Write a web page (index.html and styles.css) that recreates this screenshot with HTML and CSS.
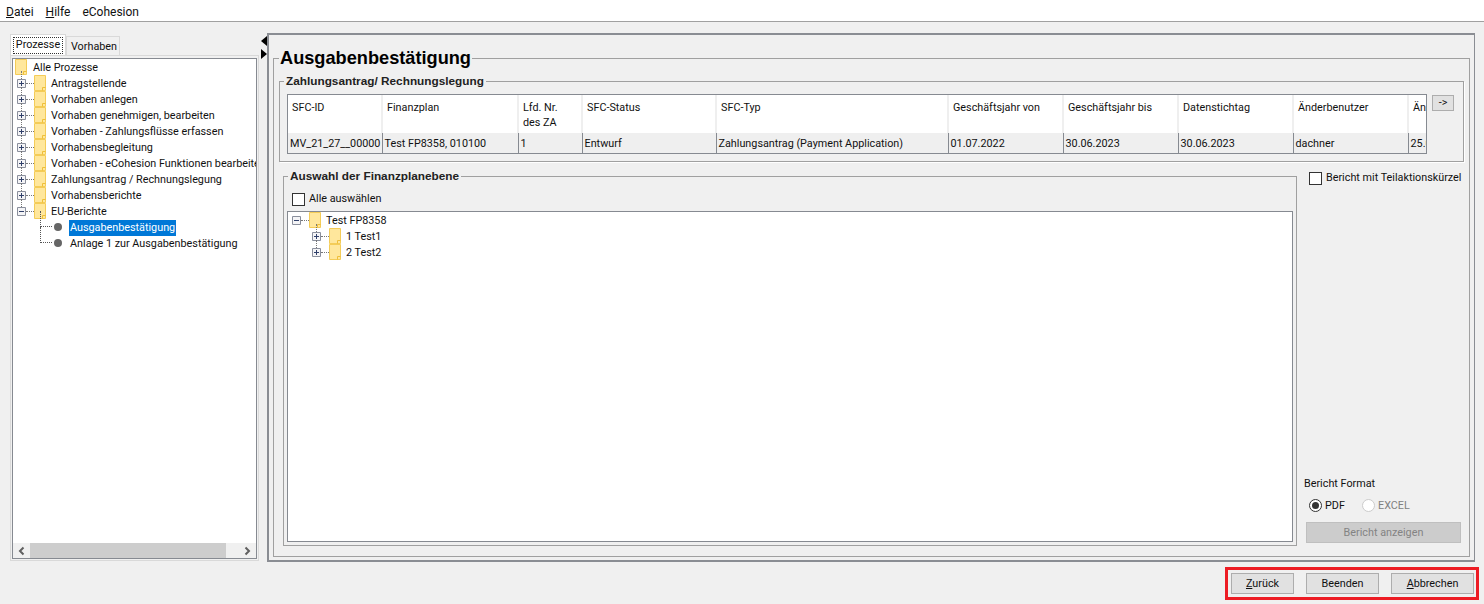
FILE: index.html
```html
<!DOCTYPE html>
<html lang="de">
<head>
    <meta charset="UTF-8">
    <title>eCohesion</title>
    <link rel="stylesheet" href="styles.css">
</head>
<body>
  <svg class="defs" width="0" height="0">
    <symbol id="folder" viewBox="0 0 12 16">
      <path d="M.5.5h11v15h-11z" fill="#ffe79c" stroke="#f4cc58"/>
      <path d="M8.500 15.500v-3h3" fill="none" stroke="#eebf3a"/>
    </symbol>
    <symbol id="plus" viewBox="0 0 9 9">
      <path d="M.5.5h8v8h-8z" fill="#f4f4f6" stroke="#8a8f9c"/>
      <path d="M2 4.500h5M4.500 2v5" stroke="#30406a"/>
    </symbol>
    <symbol id="minus" viewBox="0 0 9 9">
      <path d="M.5.5h8v8h-8z" fill="#f4f4f6" stroke="#8a8f9c"/>
      <path d="M2 4.500h5" stroke="#30406a"/>
    </symbol>
  </svg>

  <div class="menubar">
    <span><u>D</u>atei</span>
    <span><u>H</u>ilfe</span>
    <span>eCohesion</span>
  </div>

  <div class="main">
    <div class="left">
      <div class="tabs">
        <div class="tab active"><span>Prozesse</span></div>
        <div class="tab">Vorhaben</div>
      </div>
      <div class="navbox">
        <div class="navtree">
          <div class="node root"><svg class="fld"><use href="#folder"/></svg><span>Alle Prozesse</span></div>
          <div class="node"><svg class="pm"><use href="#plus"/></svg><i class="dash"></i><svg class="fld"><use href="#folder"/></svg><span>Antragstellende</span></div>
          <div class="node"><svg class="pm"><use href="#plus"/></svg><i class="dash"></i><svg class="fld"><use href="#folder"/></svg><span>Vorhaben anlegen</span></div>
          <div class="node"><svg class="pm"><use href="#plus"/></svg><i class="dash"></i><svg class="fld"><use href="#folder"/></svg><span>Vorhaben genehmigen, bearbeiten</span></div>
          <div class="node"><svg class="pm"><use href="#plus"/></svg><i class="dash"></i><svg class="fld"><use href="#folder"/></svg><span>Vorhaben - Zahlungsflüsse erfassen</span></div>
          <div class="node"><svg class="pm"><use href="#plus"/></svg><i class="dash"></i><svg class="fld"><use href="#folder"/></svg><span>Vorhabensbegleitung</span></div>
          <div class="node"><svg class="pm"><use href="#plus"/></svg><i class="dash"></i><svg class="fld"><use href="#folder"/></svg><span>Vorhaben - eCohesion Funktionen bearbeiten</span></div>
          <div class="node"><svg class="pm"><use href="#plus"/></svg><i class="dash"></i><svg class="fld"><use href="#folder"/></svg><span>Zahlungsantrag / Rechnungslegung</span></div>
          <div class="node"><svg class="pm"><use href="#plus"/></svg><i class="dash"></i><svg class="fld"><use href="#folder"/></svg><span>Vorhabensberichte</span></div>
          <div class="node"><svg class="pm"><use href="#minus"/></svg><i class="dash"></i><svg class="fld"><use href="#folder"/></svg><span>EU-Berichte</span></div>
          <div class="node leaf"><i class="elbow"></i><i class="dot"></i><span class="sel">Ausgabenbestätigung</span></div>
          <div class="node leaf"><i class="elbow"></i><i class="dot"></i><span>Anlage 1 zur Ausgabenbestätigung</span></div>
        </div>
        <div class="hscroll">
          <svg class="arrow" viewBox="0 0 17 10"><path d="M10.500 1.500 7 5l3.500 3.500" fill="none" stroke="#606060" stroke-width="2"/></svg>
          <div class="thumb"></div>
          <svg class="arrow last" viewBox="0 0 17 10"><path d="M6.500 1.500 10 5 6.500 8.500" fill="none" stroke="#606060" stroke-width="2"/></svg>
        </div>
      </div>
    </div>

    <div class="splitter">
      <i class="tri tri-l"></i>
      <i class="tri tri-r"></i>
    </div>

    <div class="panel">
      <fieldset class="page">
        <legend>Ausgabenbestätigung</legend>

        <fieldset class="group antrag">
          <legend>Zahlungsantrag/ Rechnungslegung</legend>
          <div class="tablerow">
            <div class="tablewrap">
              <table>
                <colgroup>
                  <col class="c1"><col class="c2"><col class="c3"><col class="c4"><col class="c5">
                  <col class="c6"><col class="c6"><col class="c6"><col class="c6"><col class="c7">
                </colgroup>
                <tr>
                  <th>SFC-ID</th><th>Finanzplan</th><th>Lfd. Nr.<br>des ZA</th><th>SFC-Status</th><th>SFC-Typ</th>
                  <th>Geschäftsjahr von</th><th>Geschäftsjahr bis</th><th>Datenstichtag</th><th>Änderbenutzer</th><th>Änderdatum</th>
                </tr>
                <tr>
                  <td>MV_21_27__00000</td><td>Test FP8358, 010100</td><td>1</td><td>Entwurf</td><td>Zahlungsantrag (Payment Application)</td>
                  <td>01.07.2022</td><td>30.06.2023</td><td>30.06.2023</td><td>dachner</td><td>25.07.2023</td>
                </tr>
              </table>
            </div>
            <button class="btn more">-&gt;</button>
          </div>
        </fieldset>

        <div class="lower">
          <fieldset class="group auswahl">
            <legend>Auswahl der Finanzplanebene</legend>
            <label class="check all"><i class="box"></i>Alle auswählen</label>
            <div class="plantree">
              <div class="node"><svg class="pm"><use href="#minus"/></svg><i class="dash"></i><svg class="fld"><use href="#folder"/></svg><span>Test FP8358</span></div>
              <div class="node sub"><svg class="pm"><use href="#plus"/></svg><i class="dash"></i><svg class="fld"><use href="#folder"/></svg><span>1 Test1</span></div>
              <div class="node sub"><svg class="pm"><use href="#plus"/></svg><i class="dash"></i><svg class="fld"><use href="#folder"/></svg><span>2 Test2</span></div>
            </div>
          </fieldset>

          <div class="options">
            <label class="check"><i class="box"></i>Bericht mit Teilaktionskürzel</label>
            <div class="format">
              <div class="format-title">Bericht Format</div>
              <div class="radios">
                <label class="radio"><i class="ring on"></i>PDF</label>
                <label class="radio off"><i class="ring"></i>EXCEL</label>
              </div>
              <button class="btn report">Bericht anzeigen</button>
            </div>
          </div>
        </div>
      </fieldset>
    </div>
  </div>

  <div class="footer">
    <div class="actions">
      <button class="btn zurueck"><u>Z</u>urück</button>
      <button class="btn beenden">Beenden</button>
      <button class="btn abbrechen"><u>A</u>bbrechen</button>
    </div>
  </div>
</body>
</html>
```

FILE: styles.css
```css
* {
  box-sizing: border-box;
}

html, body {
  margin: 0;
  height: 604px;
  overflow: hidden;
}

body {
  background-color: #f0f0f0;
  color: #111;
  font-family: Roboto, "Noto Sans", sans-serif;
  font-size: 10.800px;
  display: flex;
  flex-direction: column;
}

.defs {
  position: absolute;
}

i {
  display: block;
  flex: none;
}

/* menu */
.menubar {
  height: 22px;
  padding: 4px 0 0 6px;
  display: flex;
  gap: 12px;
  font-size: 12px;
  line-height: 16px;
  background: #fff;
  border-bottom: 1px solid #a0a0a0;
}

/* main area */
.main {
  height: 542px;
  display: flex;
  padding: 11px 10px 0 10px;
}

.left {
  width: 249px;
  padding-top: 1px;
  display: flex;
  flex-direction: column;
}

.tabs {
  display: flex;
  height: 21px;
  align-items: flex-end;
}

.tab {
  width: 54px;
  height: 19px;
  padding-left: 2px;
  line-height: 20px;
  text-align: center;
  background: #f0f0f0;
  border: 1px solid #d9d9d9;
  border-bottom: 0;
}

.tab.active {
  width: 56px;
  height: 21px;
  padding: 2px;
  background: #fff;
}

.tab.active span {
  display: block;
  height: 17px;
  line-height: 13px;
  border: 1px dotted #333;
}

.navbox {
  height: 506px;
  border: 1px solid #d9d9d9;
  padding: 2px 1px 1px;
  display: flex;
  flex-direction: column;
}

.navtree {
  flex: 1;
  min-height: 0;
  overflow: hidden;
  background: #fff;
  border: solid #868a91;
  border-width: 1px 1px 0;
  padding-left: 2px;
}

.node {
  height: 16px;
  display: flex;
  align-items: center;
  white-space: nowrap;
  line-height: 16px;
  position: relative;
}

.node span {
  flex: none;
  margin-top: 2px;
}

/* dotted line between the +/- boxes */
.navtree .node:not(.root):not(.leaf)::before,
.plantree .sub::before {
  content: "";
  position: absolute;
  top: -4px;
  height: 12px;
  border-left: 1px dotted #777;
  margin-left: 6px;
}

.navtree .root .fld {
  margin-right: 6px;
}

.fld {
  width: 12px;
  height: 16px;
  flex: none;
  margin-right: 5px;
}

.pm {
  width: 9px;
  height: 9px;
  flex: none;
  margin-left: 2px;
  position: relative;
}

.dash {
  width: 8px;
  border-top: 1px dotted #777;
}

.leaf {
  padding-left: 25px;
}

.elbow {
  width: 12px;
  height: 16px;
  margin: -16px 2px 0 0;
  border-left: 1px dotted #555;
  border-bottom: 1px dotted #555;
}

.dot {
  width: 8px;
  height: 8px;
  border-radius: 50%;
  background: #666;
  margin-right: 8px;
}

.sel {
  background: #0078d7;
  color: #fff;
  padding: 0 1px;
  margin-left: -1px;
}

.hscroll {
  height: 16px;
  flex: none;
  display: flex;
  align-items: center;
  background: #f0f0f0;
  border: solid #868a91;
  border-width: 0 1px 1px;
}

.arrow {
  width: 17px;
  height: 10px;
  flex: none;
}

.arrow.last {
  margin-left: auto;
}

.thumb {
  width: 196px;
  height: 15px;
  background: #cdcdcd;
}

/* splitter */
.splitter {
  width: 8px;
  padding: 3px 0 0 2px;
}

.tri {
  width: 0;
  height: 0;
  border-style: solid;
}

.tri-l {
  border-width: 5px 6px 5px 0;
  border-color: transparent #000 transparent transparent;
}

.tri-r {
  margin-top: 3px;
  border-width: 5px 0 5px 6px;
  border-color: transparent transparent transparent #000;
}

/* right panel */
.panel {
  flex: 1;
  height: 529px;
  border: solid #8a8d93;
  border-width: 2px 1px 2px 2px;
  padding: 0 4px 0 4px;
}

fieldset {
  margin: 0;
  min-width: 0;
  border: 1px solid #a0a0a0;
}

.page {
  margin-top: 12px;
  height: 510px;
  padding: 5px 5px 0 5px;
}

.page > legend {
  font-family: "Liberation Sans", sans-serif;
  font-size: 18.200px;
  font-weight: bold;
  line-height: 22px;
  padding: 0 1px;
  color: #000;
}

.group > legend {
  font-family: "Liberation Sans", sans-serif;
  font-size: 11.800px;
  font-weight: bold;
  line-height: 14px;
  padding: 0 2px;
  color: #222;
}

.antrag {
  height: 88px;
  padding: 6px 7px 0 7px;
  box-shadow: 1px 1px 0 #fff;
}

.antrag > legend {
  margin-left: -3px;
}

.tablerow {
  display: flex;
  gap: 5px;
  align-items: flex-start;
}

.tablewrap {
  width: 1140px;
  height: 60px;
  overflow: hidden;
  border: 1px solid #868a91;
  background: #efefef;
}

table {
  border-collapse: collapse;
  table-layout: fixed;
  width: 1280px;
}

.c1 { width: 94px; }
.c2 { width: 136px; }
.c3 { width: 64px; }
.c4 { width: 134px; }
.c5 { width: 232px; }
.c6 { width: 115px; }
.c7 { width: 160px; }

th {
  height: 38px;
  padding: 5px 0 0 4px;
  vertical-align: top;
  text-align: left;
  font-weight: normal;
  line-height: 15px;
  background: #fff;
  border-right: 2px solid #efefef;
}

td {
  height: 20px;
  padding: 1px 0 0 2px;
  white-space: nowrap;
  overflow: hidden;
  line-height: 19px;
  border-right: 1px solid #868a91;
}

.btn {
  font-family: inherit;
  font-size: 10.800px;
  color: #111;
  background: #e1e1e1;
  border: 1px solid #adadad;
  padding: 0;
}

.more {
  width: 22px;
  height: 16px;
  line-height: 12px;
  margin-top: 1px;
}

.lower {
  display: flex;
  margin-top: 7px;
}

.auswahl {
  width: 1014px;
  height: 377px;
  margin-left: 4px;
  padding: 0 3px 2px 3px;
}

.auswahl > legend {
  margin-left: 1px;
}

.check {
  display: flex;
  align-items: center;
  gap: 4px;
  line-height: 14px;
  white-space: nowrap;
}

.box {
  width: 13px;
  height: 13px;
  background: #fff;
  border: 1px solid #333;
}

.all {
  height: 16px;
  margin: 8px 0 0 5px;
}

.plantree {
  height: 331px;
  margin-top: 4px;
  background: #fff;
  border: 1px solid #868a91;
  padding-left: 2px;
}

.plantree .sub {
  padding-left: 20px;
}

.options {
  width: 160px;
  margin-left: 7px;
  display: flex;
  flex-direction: column;
}

.options > .check {
  margin: 2px 0 0 5px;
}

.format {
  margin-top: auto;
  margin-bottom: 3px;
}

.format-title {
  line-height: 16px;
}

.radios {
  display: flex;
  margin: 6px 0 0 5px;
  height: 14px;
}

.radio {
  width: 53px;
  display: flex;
  align-items: center;
  gap: 3px;
}

.radio.off {
  color: #808080;
}

.ring {
  width: 13px;
  height: 13px;
  border-radius: 50%;
  border: 1px solid #333;
  background: #fff;
  position: relative;
}

.ring.on::after {
  content: "";
  position: absolute;
  inset: 2px;
  border-radius: 50%;
  background: #333;
}

.radio.off .ring {
  border-color: #ccc;
}

.report {
  display: block;
  width: 155px;
  height: 21px;
  margin: 10px 0 0 2px;
  color: #838383;
  background: #ccc;
  border-color: #bfbfbf;
}

/* bottom buttons */
.footer {
  flex: 1;
  display: flex;
  justify-content: flex-end;
  padding: 3px 5px 0 0;
}

.actions {
  width: 254px;
  height: 33px;
  border: 3px solid #ed1c24;
  display: flex;
  align-items: center;
  padding: 0 2px 0 3px;
}

.actions .btn {
  height: 21px;
}

.zurueck { width: 63px; }
.beenden { width: 73px; margin-left: 12px; }
.abbrechen { width: 83px; margin-left: 12px; }
```
